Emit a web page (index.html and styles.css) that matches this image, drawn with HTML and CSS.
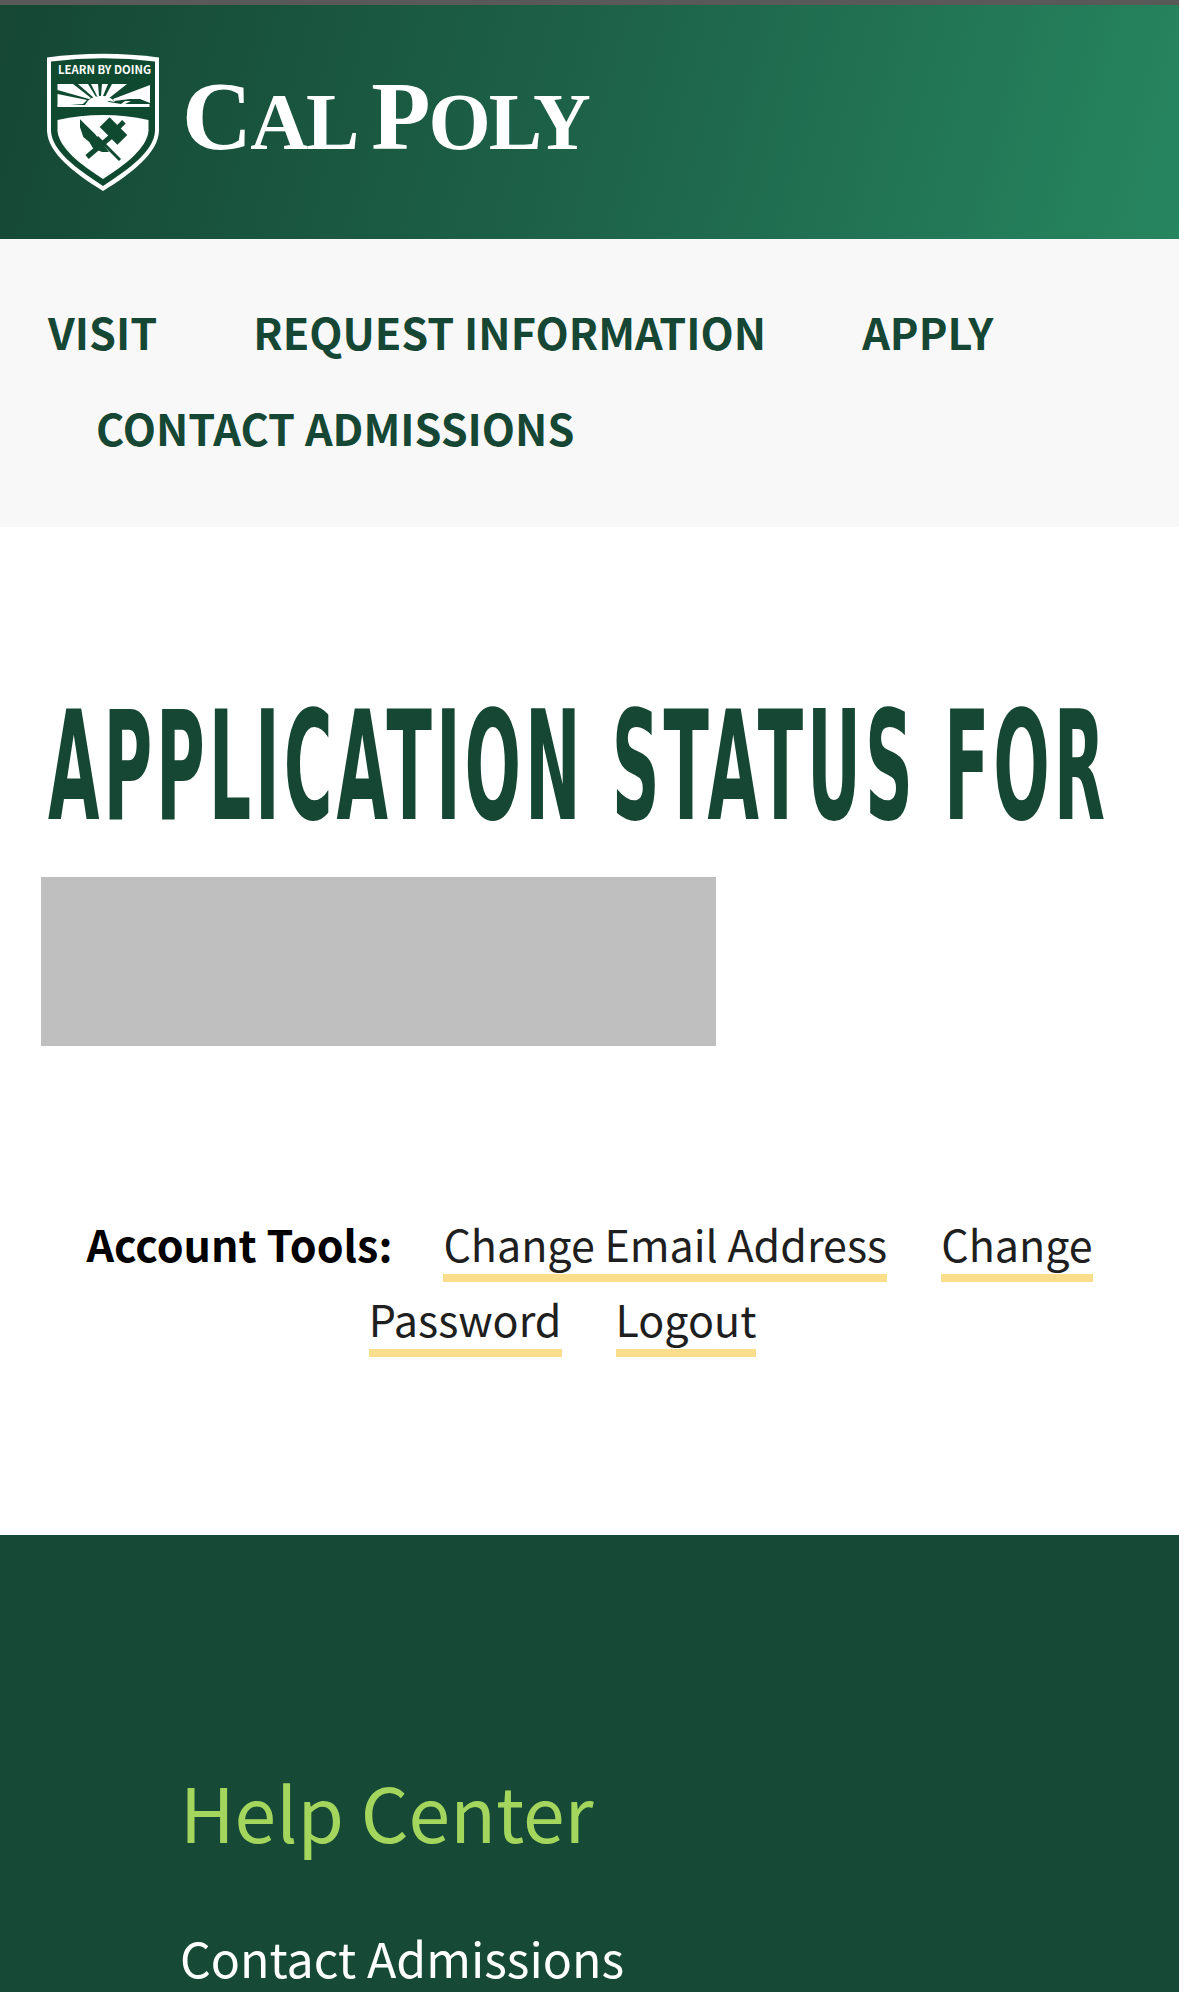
FILE: index.html
```html
<!DOCTYPE html>
<html lang="en">
<head>
<meta charset="utf-8">
<title>Application Status</title>
<link rel="stylesheet" href="styles.css">
</head>
<body>
<div class="page">
  <div class="topbar"></div>
  <header class="brand">
    <svg class="shield" viewBox="0 0 112 138" aria-hidden="true">
      <path class="w" d="M0 4.5Q56 -3 112 4.5L112 78C111 100 85 120 56 138C27 120 1 100 0 78Z"/>
      <path class="g" d="M4 8.5Q56 2 108 8.5L108 78C107 98 82 116 56 133C30 116 5 98 4 78Z"/>
      <text class="motto" x="11" y="21" textLength="93" lengthAdjust="spacingAndGlyphs">LEARN BY DOING</text>
      <polygon class="w" points="10.5,41 40,47 36,51 10.5,53"/>
      <polygon class="w" points="10.5,31 26,31 44,45 42,46 10.5,37"/>
      <polygon class="w" points="31,31 41,31 49,44 47,45"/>
      <polygon class="w" points="44,31 51,31 52,43 50,43"/>
      <polygon class="w" points="55,31 61,31 56,43 54,43"/>
      <polygon class="w" points="65,31 80,31 61,46 58,44"/>
      <polygon class="w" points="103,32 103,50 93,46 83,46 67,48 66,46"/>
      <path class="w" d="M38 52A17 14 0 0 1 68 49L62 48L50 50Z"/>
      <path class="w" d="M10.5 52L38 52L44 50L58 47L62 49L74 51L78 48L84 48L78 51L102.5 51L102.5 54L10.5 54Z"/>
      <path class="w" d="M10.5 67Q56 57 101.5 67L101.5 78C100 95 78 112 56 126C34 112 12 95 10.5 78Z"/>
      <polygon class="g" points="33,66.3 48,81 62,99 55,99 46,95.3 42.3,89 36.3,84 33,74.3"/>
      <path class="s" d="M50 84L73 107"/>
      <path class="s2" d="M67 81L40 104"/>
      <rect class="g" x="54" y="71" width="25" height="14" transform="rotate(45 66.5 78)"/>
      <rect class="g" x="71" y="67" width="5" height="9" transform="rotate(45 73 72)"/>
    </svg>
    <div class="wordmark"><span class="big">C</span>AL <span class="big">P</span>OLY</div>
  </header>
  <nav class="nav"><a class="nav-link" href="#">VISIT</a><a class="nav-link" href="#">REQUEST INFORMATION</a><a class="nav-link" href="#">APPLY</a><a class="nav-link" href="#">CONTACT ADMISSIONS</a></nav>
  <main class="content">
    <h1 class="title">APPLICATION STATUS FOR</h1>
    <div class="redacted"></div>
    <p class="tools"><strong class="tools-label">Account Tools:</strong><a class="tool" href="#">Change Email Address</a><a class="tool" href="#">Change Password</a><a class="tool" href="#">Logout</a></p>
  </main>
  <footer class="footer">
    <h2 class="footer-title">Help Center</h2>
    <a class="footer-link" href="#">Contact Admissions</a>
  </footer>
</div>
</body>
</html>
```

FILE: styles.css
```css
html, body {
  margin: 0;
  padding: 0;
  background: #fff;
}
.page {
  height: 1992px;
  overflow: hidden;
  font-family: "Noto Sans CJK JP", "Source Sans Pro", "Noto Sans", sans-serif;
}
.topbar {
  height: 5px;
  background: #595959;
}
.brand {
  height: 234px;
  box-sizing: border-box;
  padding: 0 0 0 47px;
  display: flex;
  align-items: center;
  gap: 23px;
  background: linear-gradient(105deg, #154734 0%, #1d6249 50%, #26865f 100%);
}
.shield {
  width: 112px;
  height: 138px;
  flex: none;
}
.shield .w { fill: #fff; }
.shield .g { fill: #0f4a30; }
.shield .s { stroke: #0f4a30; stroke-width: 3; fill: none; }
.shield .s2 { stroke: #0f4a30; stroke-width: 5; fill: none; }
.motto {
  fill: #fff;
  font-family: "Noto Sans CJK JP", sans-serif;
  font-weight: 700;
  font-size: 11.5px;
}
.wordmark {
  font-family: "Liberation Serif", serif;
  font-weight: 700;
  font-size: 80px;
  line-height: 94px;
  letter-spacing: -1.9px;
  color: #fff;
  white-space: nowrap;
  padding-bottom: 5px;
}
.wordmark .big { font-size: 97px; }
.nav {
  background: #f8f8f8;
  padding: 44px 48px 52px;
  height: 192px;
  font-size: 43.2px;
  line-height: 96px;
  font-weight: 700;
}
.nav-link {
  color: #154734;
  text-decoration: none;
  display: inline-block;
  margin: 0 48px;
}
.nav-link:first-child { margin-left: 0; }
.content { padding-top: 167px; }
.title {
  margin: 0 0 0 48px;
  height: 147px;
  font-family: "DejaVu Sans", sans-serif;
  font-weight: 700;
  font-size: 151px;
  line-height: 147px;
  letter-spacing: 9px;
  color: #154734;
  white-space: nowrap;
  transform: scaleX(.44);
  transform-origin: left center;
}
.redacted {
  margin: 36px 0 0 41px;
  width: 675px;
  height: 169px;
  background: #bfbfbf;
}
.tools {
  margin: 160px 0 179px;
  text-align: center;
  font-size: 43px;
  line-height: 75px;
  color: #1f1f1f;
}
.tools-label {
  color: #000;
  font-weight: 700;
  margin-right: 51px;
}
.tool {
  color: inherit;
  text-decoration: none;
  border-bottom: 8px solid #fade8b;
  margin-right: 54px;
}
.footer {
  background: #164a36;
  padding: 226px 0 0 180px;
  height: 600px;
}
.footer-title {
  margin: 0;
  font-size: 75px;
  line-height: 100px;
  font-weight: 400;
  color: #a4d65e;
}
.footer-link {
  display: block;
  margin-top: 61px;
  color: #fff;
  text-decoration: none;
  font-size: 48.3px;
  line-height: 70px;
}
```
